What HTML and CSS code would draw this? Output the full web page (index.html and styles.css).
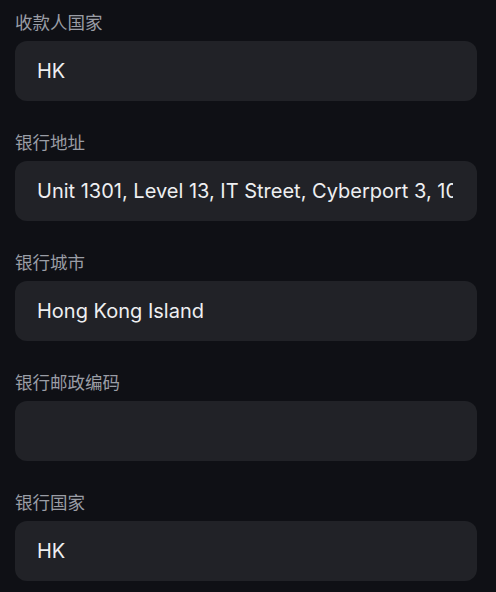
FILE: index.html
```html
<!DOCTYPE html>
<html lang="zh">
<head>
<meta charset="utf-8">
<link rel="stylesheet" href="styles.css">
</head>
<body>
<div class="form">
  <div class="field">
    <div class="label">收款人国家</div>
    <div class="input"><span class="value">HK</span></div>
  </div>
  <div class="field">
    <div class="label">银行地址</div>
    <div class="input"><span class="value">Unit 1301, Level 13, IT Street, Cyberport 3, 100 Cyberport Road, Hong Kong</span></div>
  </div>
  <div class="field">
    <div class="label">银行城市</div>
    <div class="input"><span class="value">Hong Kong Island</span></div>
  </div>
  <div class="field">
    <div class="label">银行邮政编码</div>
    <div class="input"><span class="value"></span></div>
  </div>
  <div class="field">
    <div class="label">银行国家</div>
    <div class="input"><span class="value">HK</span></div>
  </div>
</div>
</body>
</html>
```
FILE: styles.css
```css
html, body {
  margin: 0;
  padding: 0;
  background: #0f1015;
}
body {
  font-family: Inter, "Noto Sans CJK SC", sans-serif;
}
.form {
  display: flex;
  flex-direction: column;
  gap: 29px;
  padding: 10px 19px 0 15px;
}
.field {
  display: flex;
  flex-direction: column;
  gap: 7px;
}
.label {
  font-family: "Noto Sans CJK SC", sans-serif;
  font-size: 17.5px;
  line-height: 24px;
  color: #9a9da5;
}
.input {
  box-sizing: border-box;
  height: 60px;
  background: #212227;
  border-radius: 12px;
  padding: 0 24px 0 22px;
  display: flex;
  align-items: center;
}
.value {
  flex: 1;
  min-width: 0;
  overflow: hidden;
  white-space: nowrap;
  font-family: Inter, sans-serif;
  font-size: 20px;
  font-weight: 400;
  color: #eeeff1;
}
```
